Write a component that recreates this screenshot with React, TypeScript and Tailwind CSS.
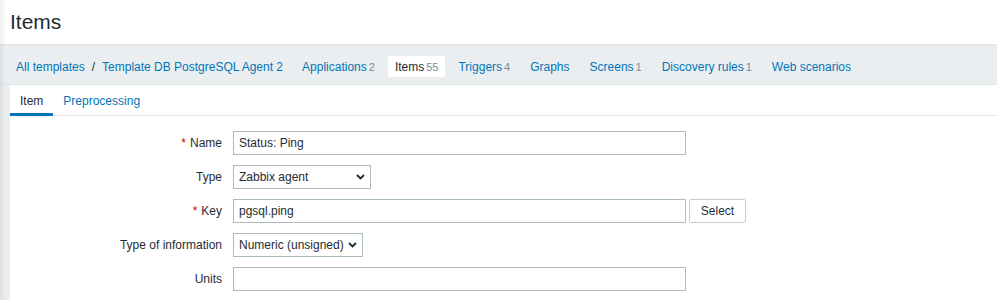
import React from 'react';

const navItems = [
  { label: 'Applications', count: '2' },
  { label: 'Items', count: '55', active: true },
  { label: 'Triggers', count: '4' },
  { label: 'Graphs' },
  { label: 'Screens', count: '1' },
  { label: 'Discovery rules', count: '1' },
  { label: 'Web scenarios' },
];

const Chevron: React.FC = () => (
  <svg className="w-[9px] h-[6px] shrink-0" viewBox="0 0 9 6" fill="none">
    <path d="M1 1l3.5 3.5L8 1" stroke="#1f2c33" strokeWidth="1.8" />
  </svg>
);

const Row: React.FC<{ label: string; required?: boolean; children: React.ReactNode }> = ({
  label,
  required,
  children,
}) => (
  <div className="flex items-center h-[24px]">
    <div className="w-[213px] pr-[1px] text-right">
      {required && <span className="text-[#d40000] mr-[4px]">*</span>}
      {label}
    </div>
    <div className="ml-[10px] flex items-center">{children}</div>
  </div>
);

const App: React.FC = () => {
  return (
    <div
      className="relative min-h-screen bg-[#ebeef0] text-[12px] leading-[14px] text-[#1f2c33]"
      style={{ fontFamily: '"Liberation Sans", Arial, sans-serif' }}
    >
      {/* sidebar shadow */}
      <div className="absolute left-0 top-0 bottom-0 w-[6px] bg-gradient-to-r from-[rgba(0,0,0,0.06)] to-transparent pointer-events-none" />

      {/* Header */}
      <header className="h-[45px] bg-white border-b border-[#dfe4e7] flex items-center pl-[10px]">
        <h1 className="text-[21px] leading-[24px] font-normal">Items</h1>
      </header>

      {/* Object navigation */}
      <nav className="h-[40px] pt-[4px] border-b border-[#dfe4e7] flex items-center pl-[10px] gap-[6px]">
        <div className="px-[6px] flex items-center">
          <a className="text-[#0275b8]">All templates</a>
          <span className="mx-[7px]">/</span>
          <a className="text-[#0275b8]">Template DB PostgreSQL Agent 2</a>
        </div>
        {navItems.map((it) => (
          <div
            key={it.label}
            className={
              it.active
                ? 'h-[21px] px-[7px] flex items-center bg-white rounded-[2px] text-[#1f2c33]'
                : 'h-[21px] px-[7px] flex items-center text-[#0275b8]'
            }
          >
            {it.label}
            {it.count && <span className="text-[11px] text-[#768d99] ml-[2px]">{it.count}</span>}
          </div>
        ))}
      </nav>

      {/* Form panel */}
      <div className="ml-[10px] bg-white min-h-[220px]">
        <div className="flex h-[31px] border-b border-[#dfe4e7]">
          <div className="h-[31px] pt-[3px] px-[10px] flex items-center border-b-[3px] border-[#0275b8]">
            Item
          </div>
          <div className="h-[31px] pt-[3px] px-[10px] flex items-center border-b-[3px] border-transparent text-[#0275b8]">
            Preprocessing
          </div>
        </div>

        <div className="pt-[15px] flex flex-col gap-[10px]">
          <Row label="Name" required>
            <div className="w-[453px] h-[24px] border border-[#acbbc2] px-[5px] flex items-center">
              Status: Ping
            </div>
          </Row>
          <Row label="Type">
            <div className="w-[138px] h-[24px] border border-[#acbbc2] pl-[5px] pr-[5px] flex items-center justify-between">
              <span>Zabbix agent</span>
              <Chevron />
            </div>
          </Row>
          <Row label="Key" required>
            <div className="w-[453px] h-[24px] border border-[#acbbc2] px-[5px] flex items-center">
              pgsql.ping
            </div>
            <button className="ml-[3px] w-[57px] h-[24px] border border-[#c5cdd1] rounded-[2px] bg-white text-[#1f2c33] flex items-center justify-center">
              Select
            </button>
          </Row>
          <Row label="Type of information">
            <div className="w-[130px] h-[24px] border border-[#acbbc2] pl-[5px] pr-[5px] flex items-center justify-between">
              <span>Numeric (unsigned)</span>
              <Chevron />
            </div>
          </Row>
          <Row label="Units">
            <div className="w-[453px] h-[24px] border border-[#acbbc2] px-[5px]" />
          </Row>
        </div>
      </div>
    </div>
  );
};

export default App;
